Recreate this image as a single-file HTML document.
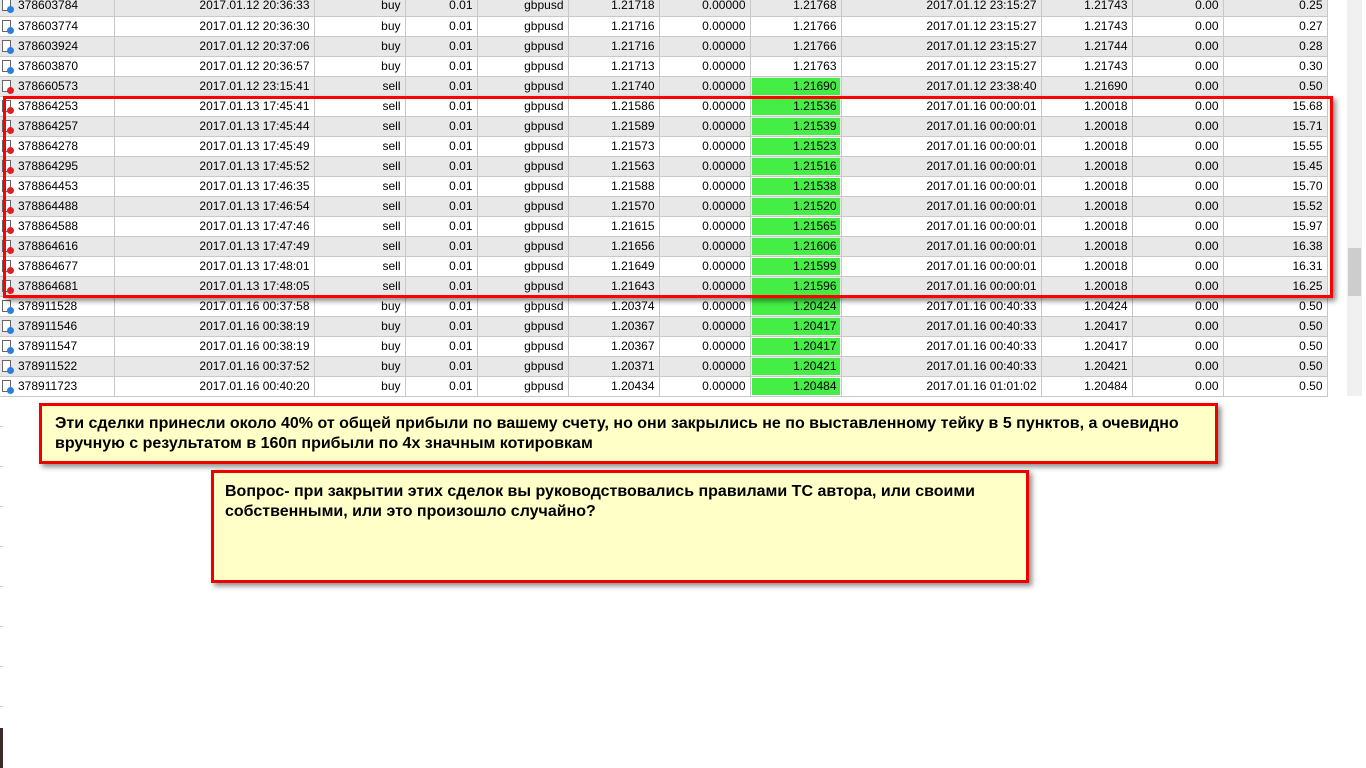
<!DOCTYPE html>
<html><head><meta charset="utf-8"><style>
body{margin:0;width:1366px;height:768px;background:#fff;position:relative;overflow:hidden;font-family:"Liberation Sans",Arial,sans-serif}
table{position:absolute;left:0;top:-4px;border-collapse:collapse;table-layout:fixed;font-size:12px;color:#000}
tr{height:20px}
td{height:20px;padding:0 4px 0 0;border-right:1px solid #c8c8c8;border-bottom:1px solid #c8c8c8;text-align:right;white-space:nowrap;overflow:hidden;box-sizing:border-box;line-height:19px}
tr.g td{background:#e8e8e8}
td.t{text-align:left;padding-left:18px;position:relative}
td.gr{background:#44ee44 !important;box-shadow:inset 0 0 0 1px #fff}
tr.g td.gr{box-shadow:inset 0 0 0 1px #e8e8e8}
.ic{position:absolute;left:2px;top:3px;width:9px;height:12px;border:1px solid #666;background:#fff;box-sizing:border-box}
.ic i{position:absolute;left:4px;top:6px;width:7px;height:7px;border-radius:50%}
.box{position:absolute;border:3px solid #ff0000;box-shadow:3px 3px 5px rgba(0,0,0,.45)}
.note{position:absolute;background:#ffffc8;border:3px solid #ee0000;box-shadow:3px 3px 5px rgba(0,0,0,.45);font-weight:bold;font-size:16px;line-height:20px;box-sizing:border-box;color:#000;white-space:nowrap}
.sb{position:absolute;left:1347px;top:0;width:15px;height:396px;background:#f0f0f0}
.th{position:absolute;left:1348px;top:248px;width:13px;height:48px;background:#cdcdcd}
.tick{position:absolute;left:0;width:3px;height:1px;background:#ccc}
</style></head><body>
<table>
<colgroup><col style="width:114px"><col style="width:200px"><col style="width:91px"><col style="width:72px"><col style="width:91px"><col style="width:91px"><col style="width:91px"><col style="width:91px"><col style="width:200px"><col style="width:91px"><col style="width:91px"><col style="width:104px"></colgroup>
<tr class="g"><td class="t"><span class="ic"><i style="background:#2a7fe0"></i></span>378603784</td><td>2017.01.12 20:36:33</td><td>buy</td><td>0.01</td><td>gbpusd</td><td>1.21718</td><td>0.00000</td><td>1.21768</td><td>2017.01.12 23:15:27</td><td>1.21743</td><td>0.00</td><td>0.25</td></tr>
<tr><td class="t"><span class="ic"><i style="background:#2a7fe0"></i></span>378603774</td><td>2017.01.12 20:36:30</td><td>buy</td><td>0.01</td><td>gbpusd</td><td>1.21716</td><td>0.00000</td><td>1.21766</td><td>2017.01.12 23:15:27</td><td>1.21743</td><td>0.00</td><td>0.27</td></tr>
<tr class="g"><td class="t"><span class="ic"><i style="background:#2a7fe0"></i></span>378603924</td><td>2017.01.12 20:37:06</td><td>buy</td><td>0.01</td><td>gbpusd</td><td>1.21716</td><td>0.00000</td><td>1.21766</td><td>2017.01.12 23:15:27</td><td>1.21744</td><td>0.00</td><td>0.28</td></tr>
<tr><td class="t"><span class="ic"><i style="background:#2a7fe0"></i></span>378603870</td><td>2017.01.12 20:36:57</td><td>buy</td><td>0.01</td><td>gbpusd</td><td>1.21713</td><td>0.00000</td><td>1.21763</td><td>2017.01.12 23:15:27</td><td>1.21743</td><td>0.00</td><td>0.30</td></tr>
<tr class="g"><td class="t"><span class="ic"><i style="background:#e02020"></i></span>378660573</td><td>2017.01.12 23:15:41</td><td>sell</td><td>0.01</td><td>gbpusd</td><td>1.21740</td><td>0.00000</td><td class="gr">1.21690</td><td>2017.01.12 23:38:40</td><td>1.21690</td><td>0.00</td><td>0.50</td></tr>
<tr><td class="t"><span class="ic"><i style="background:#e02020"></i></span>378864253</td><td>2017.01.13 17:45:41</td><td>sell</td><td>0.01</td><td>gbpusd</td><td>1.21586</td><td>0.00000</td><td class="gr">1.21536</td><td>2017.01.16 00:00:01</td><td>1.20018</td><td>0.00</td><td>15.68</td></tr>
<tr class="g"><td class="t"><span class="ic"><i style="background:#e02020"></i></span>378864257</td><td>2017.01.13 17:45:44</td><td>sell</td><td>0.01</td><td>gbpusd</td><td>1.21589</td><td>0.00000</td><td class="gr">1.21539</td><td>2017.01.16 00:00:01</td><td>1.20018</td><td>0.00</td><td>15.71</td></tr>
<tr><td class="t"><span class="ic"><i style="background:#e02020"></i></span>378864278</td><td>2017.01.13 17:45:49</td><td>sell</td><td>0.01</td><td>gbpusd</td><td>1.21573</td><td>0.00000</td><td class="gr">1.21523</td><td>2017.01.16 00:00:01</td><td>1.20018</td><td>0.00</td><td>15.55</td></tr>
<tr class="g"><td class="t"><span class="ic"><i style="background:#e02020"></i></span>378864295</td><td>2017.01.13 17:45:52</td><td>sell</td><td>0.01</td><td>gbpusd</td><td>1.21563</td><td>0.00000</td><td class="gr">1.21516</td><td>2017.01.16 00:00:01</td><td>1.20018</td><td>0.00</td><td>15.45</td></tr>
<tr><td class="t"><span class="ic"><i style="background:#e02020"></i></span>378864453</td><td>2017.01.13 17:46:35</td><td>sell</td><td>0.01</td><td>gbpusd</td><td>1.21588</td><td>0.00000</td><td class="gr">1.21538</td><td>2017.01.16 00:00:01</td><td>1.20018</td><td>0.00</td><td>15.70</td></tr>
<tr class="g"><td class="t"><span class="ic"><i style="background:#e02020"></i></span>378864488</td><td>2017.01.13 17:46:54</td><td>sell</td><td>0.01</td><td>gbpusd</td><td>1.21570</td><td>0.00000</td><td class="gr">1.21520</td><td>2017.01.16 00:00:01</td><td>1.20018</td><td>0.00</td><td>15.52</td></tr>
<tr><td class="t"><span class="ic"><i style="background:#e02020"></i></span>378864588</td><td>2017.01.13 17:47:46</td><td>sell</td><td>0.01</td><td>gbpusd</td><td>1.21615</td><td>0.00000</td><td class="gr">1.21565</td><td>2017.01.16 00:00:01</td><td>1.20018</td><td>0.00</td><td>15.97</td></tr>
<tr class="g"><td class="t"><span class="ic"><i style="background:#e02020"></i></span>378864616</td><td>2017.01.13 17:47:49</td><td>sell</td><td>0.01</td><td>gbpusd</td><td>1.21656</td><td>0.00000</td><td class="gr">1.21606</td><td>2017.01.16 00:00:01</td><td>1.20018</td><td>0.00</td><td>16.38</td></tr>
<tr><td class="t"><span class="ic"><i style="background:#e02020"></i></span>378864677</td><td>2017.01.13 17:48:01</td><td>sell</td><td>0.01</td><td>gbpusd</td><td>1.21649</td><td>0.00000</td><td class="gr">1.21599</td><td>2017.01.16 00:00:01</td><td>1.20018</td><td>0.00</td><td>16.31</td></tr>
<tr class="g"><td class="t"><span class="ic"><i style="background:#e02020"></i></span>378864681</td><td>2017.01.13 17:48:05</td><td>sell</td><td>0.01</td><td>gbpusd</td><td>1.21643</td><td>0.00000</td><td class="gr">1.21596</td><td>2017.01.16 00:00:01</td><td>1.20018</td><td>0.00</td><td>16.25</td></tr>
<tr><td class="t"><span class="ic"><i style="background:#2a7fe0"></i></span>378911528</td><td>2017.01.16 00:37:58</td><td>buy</td><td>0.01</td><td>gbpusd</td><td>1.20374</td><td>0.00000</td><td class="gr">1.20424</td><td>2017.01.16 00:40:33</td><td>1.20424</td><td>0.00</td><td>0.50</td></tr>
<tr class="g"><td class="t"><span class="ic"><i style="background:#2a7fe0"></i></span>378911546</td><td>2017.01.16 00:38:19</td><td>buy</td><td>0.01</td><td>gbpusd</td><td>1.20367</td><td>0.00000</td><td class="gr">1.20417</td><td>2017.01.16 00:40:33</td><td>1.20417</td><td>0.00</td><td>0.50</td></tr>
<tr><td class="t"><span class="ic"><i style="background:#2a7fe0"></i></span>378911547</td><td>2017.01.16 00:38:19</td><td>buy</td><td>0.01</td><td>gbpusd</td><td>1.20367</td><td>0.00000</td><td class="gr">1.20417</td><td>2017.01.16 00:40:33</td><td>1.20417</td><td>0.00</td><td>0.50</td></tr>
<tr class="g"><td class="t"><span class="ic"><i style="background:#2a7fe0"></i></span>378911522</td><td>2017.01.16 00:37:52</td><td>buy</td><td>0.01</td><td>gbpusd</td><td>1.20371</td><td>0.00000</td><td class="gr">1.20421</td><td>2017.01.16 00:40:33</td><td>1.20421</td><td>0.00</td><td>0.50</td></tr>
<tr><td class="t"><span class="ic"><i style="background:#2a7fe0"></i></span>378911723</td><td>2017.01.16 00:40:20</td><td>buy</td><td>0.01</td><td>gbpusd</td><td>1.20434</td><td>0.00000</td><td class="gr">1.20484</td><td>2017.01.16 01:01:02</td><td>1.20484</td><td>0.00</td><td>0.50</td></tr>
</table>
<div class="sb"></div><div class="th"></div>
<div class="box" style="left:3px;top:96px;width:1324px;height:196px"></div>
<div class="tick" style="top:426px"></div><div class="tick" style="top:466px"></div><div class="tick" style="top:506px"></div><div class="tick" style="top:546px"></div><div class="tick" style="top:586px"></div><div class="tick" style="top:626px"></div><div class="tick" style="top:666px"></div><div class="tick" style="top:706px"></div>
<div style="position:absolute;left:0;top:728px;width:3px;height:40px;background:#3a2a2a"></div>
<div class="note" style="left:39px;top:403px;width:1179px;height:61px;padding:8px 0 0 13px">Эти сделки принесли около 40% от общей прибыли по вашему счету, но они закрылись не по выставленному тейку в 5 пунктов, а очевидно<br>вручную с результатом в 160п прибыли по 4х значным котировкам</div>
<div class="note" style="left:211px;top:470px;width:818px;height:113px;padding:9px 0 0 11px">Вопрос- при закрытии этих сделок вы руководствовались правилами ТС автора, или своими<br>собственными, или это произошло случайно?</div>
</body></html>
